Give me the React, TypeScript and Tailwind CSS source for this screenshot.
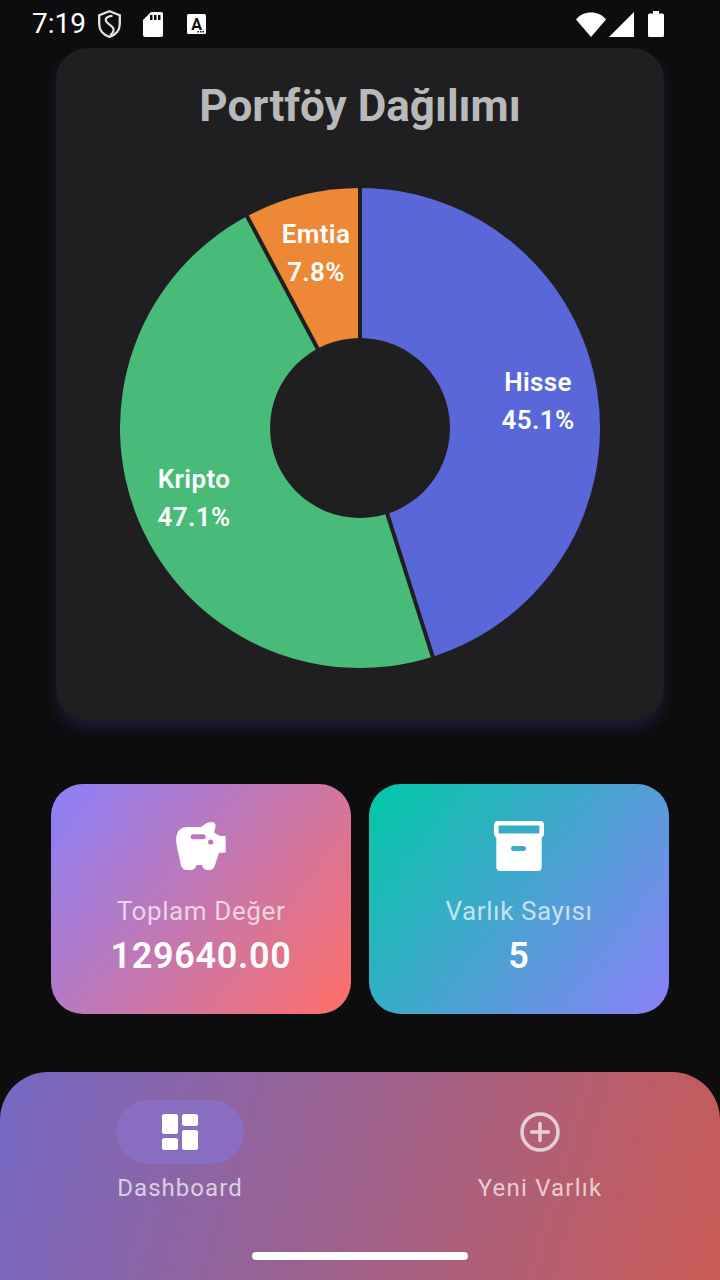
const CARD = "#1f1f21";

const slices = [
  { pct: 45.1, color: "#5A67D8" },
  { pct: 47.1, color: "#48BB78" },
  { pct: 7.8, color: "#ED8936" },
];

function point(cx: number, cy: number, r: number, deg: number) {
  const a = (deg * Math.PI) / 180;
  return [cx + r * Math.sin(a), cy - r * Math.cos(a)];
}

function PieChart() {
  let start = 0;
  const parts = slices.map((s) => {
    const end = start + (s.pct / 100) * 360;
    const [x1, y1] = point(240, 240, 240, start);
    const [x2, y2] = point(240, 240, 240, end);
    const large = end - start > 180 ? 1 : 0;
    const d = `M240 240 L${x1} ${y1} A240 240 0 ${large} 1 ${x2} ${y2} Z`;
    const [lx, ly] = point(240, 240, 250, start);
    start = end;
    return { d, color: s.color, lx, ly };
  });
  return (
    <svg width="480" height="480" viewBox="0 0 480 480" className="block overflow-visible">
      {parts.map((p) => (
        <path key={p.color} d={p.d} fill={p.color} />
      ))}
      {parts.map((p) => (
        <line key={p.color} x1="240" y1="240" x2={p.lx} y2={p.ly} stroke={CARD} strokeWidth="4" />
      ))}
      <circle cx="240" cy="240" r="90" fill={CARD} />
    </svg>
  );
}

function Label({ name, value, className }: { name: string; value: string; className: string }) {
  return (
    <div className={`absolute w-[120px] text-center text-[26px] leading-[38px] font-semibold tracking-[0.35px] text-white ${className}`}>
      <div>{name}</div>
      <div>{value}</div>
    </div>
  );
}

function StatusBar() {
  return (
    <div className="flex h-12 shrink-0 items-center pr-14 pl-8 text-white">
      <span className="w-[55px] text-[28px] leading-none font-normal">7:19</span>
      <svg width="23" height="28" viewBox="0 0 23 28" className="ml-[11px]" fill="none" stroke="#e4e4e4" strokeWidth="2.300">
        <path d="M11.500 1.300 21.800 5.300v8.700c0 6-4 11-10.300 12.800C5.200 25 1.200 20 1.200 14V5.300Z" />
        <path d="M14.500 5.800C10 5.800 7 8 8 11c1 3 7 4.500 7.500 8 .3 2.500-1.500 5-3.500 6" strokeWidth="2.200" />
      </svg>
      <svg width="20" height="25" viewBox="0 0 20 25" className="ml-[22px]" fill="white">
        <path d="M8 0h10a2 2 0 0 1 2 2v21a2 2 0 0 1-2 2H2a2 2 0 0 1-2-2V8Z" />
        <rect x="7" y="3" width="2.500" height="5" fill="#0d0d0f" />
        <rect x="11" y="3" width="2.500" height="5" fill="#0d0d0f" />
        <rect x="15" y="3" width="2.500" height="5" fill="#0d0d0f" />
      </svg>
      <svg width="19" height="20" viewBox="0 0 19 20" className="ml-[24px]">
        <rect width="19" height="20" rx="1.500" fill="white" />
        <text x="9.500" y="16" textAnchor="middle" fontSize="16" fontWeight="700" fill="#0d0d0f">
          A
        </text>
        <rect x="10.500" y="17" width="1.500" height="1.500" fill="#0d0d0f" />
        <rect x="13" y="17" width="1.500" height="1.500" fill="#0d0d0f" />
        <rect x="15.500" y="17" width="1.500" height="1.500" fill="#0d0d0f" />
      </svg>
      <div className="ml-auto flex items-center">
        <svg width="30" height="25" viewBox="0 0 30 25" fill="white">
          <path d="M0 7.500C3.500 3 9 0.500 15 0.500s11.500 2.500 15 7L15 25Z" />
        </svg>
        <svg width="25" height="25" viewBox="0 0 25 25" className="ml-[3px]" fill="white">
          <path d="M25 0v25H0Z" />
        </svg>
        <svg width="16" height="26" viewBox="0 0 16 26" className="ml-[14px]" fill="white">
          <path d="M5 0h6v2.500h3.500A1.500 1.500 0 0 1 16 4v20.500a1.500 1.500 0 0 1-1.500 1.500h-13A1.500 1.500 0 0 1 0 24.500V4a1.500 1.500 0 0 1 1.500-1.500H5Z" />
        </svg>
      </div>
    </div>
  );
}

function PiggyIcon() {
  return (
    <svg width="50" height="48" viewBox="0 0 50 48" fill="white">
      <path
        fillRule="evenodd"
        d="M12 5H25C28 2.500 31.500 0 35.500 0c3 0 4.500 2 4 4.500L38 10.500 44 14h4.500a1.200 1.200 0 0 1 1.200 1.200v14.300a1.200 1.200 0 0 1-1.200 1.200H43L39.500 41.500C38.500 45.500 36.500 48 33.500 48h-2c-3 0-5-2.500-5.500-5h-5.500c-.5 2.500-2.500 5-5.500 5h-4c-3.500 0-5.500-2.500-6.200-5.500L.8 24C-1.500 12 2.500 5 12 5ZM17.200 12.300a2.500 2.500 0 0 0 0 5h10a2.500 2.500 0 0 0 0-5ZM34.700 17.400a2.600 2.600 0 1 0 0 5.200 2.600 2.600 0 0 0 0-5.200Z"
      />
    </svg>
  );
}

function BoxIcon() {
  return (
    <svg width="50" height="50" viewBox="0 0 50 50" fill="white">
      <path
        fillRule="evenodd"
        d="M4 0h42a4 4 0 0 1 4 4v9a4 4 0 0 1-2.300 3.500V46a4 4 0 0 1-4 4h-37.400a4 4 0 0 1-4-4V16.500A4 4 0 0 1 0 13V4a4 4 0 0 1 4-4Zm.600 4.600v7.800h40.800V4.600ZM19.500 25a2.500 2.500 0 0 0 0 5h10a2.500 2.500 0 0 0 0-5Z"
      />
    </svg>
  );
}

function StatCard({
  icon,
  title,
  value,
  className,
}: {
  icon: React.ReactNode;
  title: string;
  value: string;
  className: string;
}) {
  return (
    <div className={`flex h-[230px] w-[300px] flex-col items-center rounded-[32px] ${className}`}>
      <div className="mt-[36px] flex h-[52px] items-center justify-center">{icon}</div>
      <div className="mt-[23px] text-[26px] leading-[32px] tracking-[0.6px] text-white/70">{title}</div>
      <div className="mt-[6px] text-[36px] leading-[46px] font-semibold tracking-[0.7px] text-white">{value}</div>
    </div>
  );
}

export default function App() {
  return (
    <div className="flex h-[1280px] w-[720px] flex-col overflow-hidden bg-[#0d0d0f] font-['Roboto',sans-serif]">
      <StatusBar />

      <div className="mx-14 h-[672px] shrink-0 rounded-[32px] bg-[#1f1f21] shadow-[0_8px_16px_-2px_rgba(108,99,255,0.2)]">
        <h1 className="mt-[30px] text-center text-[44px] leading-[56px] font-bold text-[#b9b9ba]">Portföy Dağılımı</h1>
        <div className="relative mx-auto mt-[54px] h-[480px] w-[480px]">
          <PieChart />
          <Label name="Hisse" value="45.1%" className="top-[175px] left-[358px]" />
          <Label name="Kripto" value="47.1%" className="top-[272px] left-[14px]" />
          <Label name="Emtia" value="7.8%" className="top-[27px] left-[136px]" />
        </div>
      </div>

      <div className="mt-16 flex justify-center gap-[18px]">
        <StatCard
          icon={<PiggyIcon />}
          title="Toplam Değer"
          value="129640.00"
          className="bg-[linear-gradient(127.5deg,#8a80fa,#ff6f66)]"
        />
        <StatCard
          icon={<BoxIcon />}
          title="Varlık Sayısı"
          value="5"
          className="bg-[linear-gradient(127.5deg,#00c9a7,#8c80f8)]"
        />
      </div>

      <nav className="mt-auto flex h-[208px] flex-col rounded-t-[48px] bg-[linear-gradient(106deg,#7568c4,#c95b54)] pt-[28px]">
        <div className="grid grid-cols-2">
          <div className="flex flex-col items-center">
            <div className="flex h-16 w-32 items-center justify-center rounded-full bg-[rgba(136,110,195,0.9)]">
              <svg width="36" height="36" viewBox="0 0 36 36" fill="white">
                <rect width="16" height="20" rx="2.500" />
                <rect y="24" width="16" height="12" rx="2.500" />
                <rect x="20" width="16" height="12" rx="2.500" />
                <rect x="20" y="16" width="16" height="20" rx="2.500" />
              </svg>
            </div>
            <span className="mt-[9px] text-[24px] leading-[30px] tracking-[1.05px] text-white/70">Dashboard</span>
          </div>
          <div className="flex flex-col items-center">
            <div className="flex h-16 w-32 items-center justify-center">
              <svg width="40" height="40" viewBox="0 0 40 40" fill="none" stroke="white" strokeOpacity="0.7" strokeWidth="3.500" strokeLinecap="round">
                <circle cx="20" cy="20" r="18" />
                <path d="M20 11.500v17M11.500 20h17" />
              </svg>
            </div>
            <span className="mt-[9px] text-[24px] leading-[30px] tracking-[1.2px] text-white/70">Yeni Varlık</span>
          </div>
        </div>
        <div className="mx-auto mt-[49px] h-2 w-[216px] rounded-full bg-white" />
      </nav>
    </div>
  );
}
